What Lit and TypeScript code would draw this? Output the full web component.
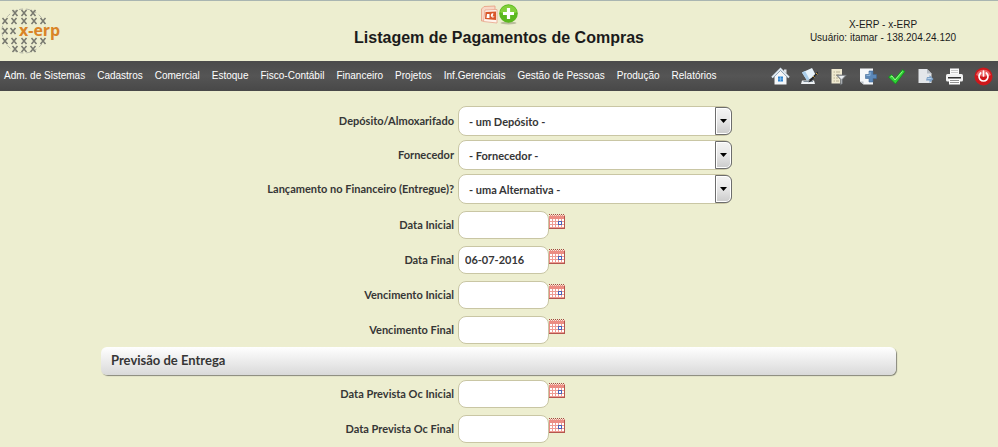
import { LitElement, html, css, svg } from "lit";
import { customElement, property } from "lit/decorators.js";

const MENU = [
  "Adm. de Sistemas", "Cadastros", "Comercial", "Estoque", "Fisco-Contábil", "Financeiro",
  "Projetos", "Inf.Gerenciais", "Gestão de Pessoas", "Produção", "Relatórios",
];

const TOOLS = [
  { label: "Início", art: svg`
    <path d="M3.500 9v8.500h12V9L9.500 3.500z" fill="#f4f6f8"/>
    <path d="M13 2.500h2.500v4L13 4.500z" fill="#dfe3e8"/>
    <path d="M1 10.500 9.500 2l8.500 8.500" fill="none" stroke="#dde7f0" stroke-width="2"/>
    <path d="M2.500 10.500 9.500 3.500l7 7" fill="none" stroke="#7b93a8" stroke-width=".7"/>
    <rect x="7" y="9.500" width="5" height="5" fill="#2f83cf"/>
    <path d="M9.500 9.500v5M7 12h5" stroke="#9fd0f4" stroke-width=".6"/>` },
  { label: "Editar", art: svg`
    <path d="M2 13.500h12l1 3.500H1z" fill="#eef1f4"/><path d="M3.500 14.500h9.500" stroke="#7f8c98"/>
    <path d="M2 5.500 12 1l4 7.500-9 5z" fill="#e8f3fb"/>
    <path d="m2 5.500 3-1.400 4.500 8.200L7 13.500z" fill="#a9cdea"/>
    <path d="M17.500 4.500 10 12.500l-1.500 3 3-1.500L18 6z" fill="#26292c"/>
    <path d="m16 6 1.500 1.500M13 9l1.500 1.500" stroke="#d7a23a"/>` },
  { label: "Filtrar", art: svg`
    <path d="M2.500 2H13v14.500H2.500z" fill="#efe9d0"/>
    <path d="M4.500 5H6m1 0h4M4.500 8H6m1 0h3M4.500 11H6m1 0h2M4.500 14H6m1 0h3" stroke="#b9b194"/>
    <path d="M7.500 8h10l-4 4.500v4l-2 1.500v-5.500z" fill="#a8acb0" stroke="#62666a" stroke-width=".7"/>
    <path d="M9.500 9h6l-3 3z" fill="#edf0f2"/>` },
  { label: "Novo", art: svg`
    <path d="M2 1.500h13v16H5.500L2 14.500z" fill="#f5f7f9"/><path d="M2 14.500h3.500v3z" fill="#b8bec6"/>
    <path d="M11 4h4v3.500h3.500v4H15V15h-4v-3.500H7.500v-4H11z" fill="#5c88b8" stroke="#3f6998" stroke-width=".6"/>
    <path d="M12 5v3.500H8.500" fill="none" stroke="#90b6dc"/>` },
  { label: "Confirmar", art: svg`
    <path d="m1.500 10 3-2.500 3.500 4L15.500 2.500 18 4.500 8.500 17z" fill="#2fd335" stroke="#128a1a" stroke-width=".8"/>
    <path d="m3.500 10 1.500-1 3 4 7.500-8.500" fill="none" stroke="#9cf78d"/>` },
  { label: "Exportar", art: svg`
    <path d="M2.500 2H11l4.500 4.500V16h-13z" fill="#e3e6ea"/><path d="M11 2v4.500h4.500z" fill="#b5bbc3"/>
    <path d="M11 10h2.500v-2l4 4-4 4v-2.500H10z" fill="#7fa3c9"/>
    <path d="M11.500 11.500h4" stroke="#b6d0ea"/>` },
  { label: "Imprimir", art: svg`
    <path d="M5 1.500h9V8H5z" fill="#fafafa"/><path d="M6 3.500h7M6 5.500h7" stroke="#b5b5b5" stroke-width=".7"/>
    <rect x="1" y="7" width="17" height="7.500" rx="1.500" fill="#f1f1f1"/>
    <path d="M3 10h13v1.500H3z" fill="#333"/><path d="M4 12h11v5.500H4z" fill="#fff"/>
    <path d="M5 13.500h9M5 15.500h9" stroke="#777" stroke-width=".8"/>` },
  { label: "Sair", art: svg`
    <circle cx="9.500" cy="9.500" r="9" fill="#cf171b"/><path d="M2 8a8 8 0 0 1 15 0c-4 2-11 2-15 0z" fill="#ea6062"/>
    <path d="M6.700 6a4.500 4.500 0 1 0 5.600 0" fill="none" stroke="#fff" stroke-width="1.700" stroke-linecap="round"/>
    <path d="M9.500 4v5" stroke="#fff" stroke-width="1.700" stroke-linecap="round"/>` },
];

type Field = { id: string; label: string; option?: string; value?: string };

const FILTERS: Field[] = [
  { id: "deposito", label: "Depósito/Almoxarifado", option: "- um Depósito -" },
  { id: "fornecedor", label: "Fornecedor", option: "- Fornecedor -" },
  { id: "lancamento", label: "Lançamento no Financeiro (Entregue)?", option: "- uma Alternativa -" },
];

const DATES: Field[] = [
  { id: "data-inicial", label: "Data Inicial" },
  { id: "data-final", label: "Data Final", value: "06-07-2016" },
  { id: "venc-inicial", label: "Vencimento Inicial" },
  { id: "venc-final", label: "Vencimento Final" },
];

const DELIVERY: Field[] = [
  { id: "oc-inicial", label: "Data Prevista Oc Inicial" },
  { id: "oc-final", label: "Data Prevista Oc Final" },
];

const reset = css`
  :host, * { box-sizing: border-box; }
  button { border: 0; padding: 0; margin: 0; background: none; cursor: pointer; }
  svg { display: block; }
`;

@customElement("erp-header")
export class ErpHeader extends LitElement {
  static styles = [reset, css`
    :host {
      display: grid; grid-template-columns: 230px 1fr 230px; height: 61px;
      border-top: 1px solid #a9b5b1; color: #1b1b1b;
      font-family: "Liberation Sans", Arial, sans-serif;
    }
    .brand { padding: 6px 0 0 1px; }
    .brand text { font: bold 16px "Open Sans", sans-serif; fill: #d98427; }
    .center { display: flex; flex-direction: column; align-items: center; padding-top: 2px; }
    .quick { display: flex; height: 22px; }
    h1 { margin: 2px 0 0; font-size: 16px; line-height: 22px; font-weight: bold; white-space: nowrap; }
    .user { padding-top: 17px; font-size: 10px; line-height: 13px; text-align: center; }
    .user p { margin: 0; }
  `];

  render() {
    const rows: [number, number[]][] = [
      [6, [14, 23, 32]], [14, [4, 13, 23, 33, 42]], [24, [4, 12]],
      [34, [4, 13, 23, 33, 42]], [42, [14, 23, 32]],
    ];
    return html`
      <div class="brand">
        <svg width="62" height="50" viewBox="0 0 62 50" role="img" aria-label="x-erp">
          <circle cx="23" cy="24" r="22" fill="none" stroke="#b4b6a8" stroke-dasharray="4 3"/>
          ${rows.map(([y, xs]) => xs.map((x) => svg`<path
            d="M${x - 2.5} ${y - 3}l5 6m0-6l-5 6" stroke="#77786f" stroke-width="1.500"/>`))}
          <text x="18" y="29">x-erp</text>
        </svg>
      </div>
      <div class="center">
        <div class="quick">
          <button aria-label="Apresentação">
            <svg width="18" height="22" viewBox="0 0 18 22">
              <path d="M4 3.500 15 3v4L6 8l-2 10H1.500V6z" fill="#f7d8c6" stroke="#e79b7e" stroke-width=".8"/>
              <path d="m5 7 12-.5V20L3.500 18.500z" fill="#fff4ec" stroke="#e9a58b" stroke-width=".8"/>
              <path d="m5.500 9 10.500-.5v8.500l-11-1z" fill="#d9582a"/>
              <path d="M7 11h2.500v4H6.500zm6.500-.5a2 2 0 1 0 1 3h-2z" fill="#fff"/>
            </svg>
          </button>
          <button aria-label="Adicionar">
            <svg width="21" height="22" viewBox="0 0 21 22">
              <ellipse cx="10.500" cy="20" rx="8" ry="1.500" fill="#b9bd9c"/>
              <circle cx="10.500" cy="10.500" r="9.300" fill="#5bb81f"/>
              <path d="M2 9a8.700 8.700 0 0 1 17 0c-5 3-12 3-17 0z" fill="#83d13b"/>
              <path d="M10.500 5v11M5 10.500h11" stroke="#fff" stroke-width="3.200"/>
            </svg>
          </button>
        </div>
        <h1>Listagem de Pagamentos de Compras</h1>
      </div>
      <div class="user"><p>X-ERP - x-ERP</p><p>Usuário: itamar - 138.204.24.120</p></div>`;
  }
}

@customElement("erp-menu")
export class ErpMenu extends LitElement {
  static styles = [reset, css`
    :host {
      display: flex; align-items: center; justify-content: space-between;
      height: 30px; padding: 0 5px 0 4px; background: linear-gradient(#4b4b4b, #555 50%, #484848);
      font-family: "Liberation Sans", Arial, sans-serif;
    }
    nav { display: flex; gap: 12px; }
    a { color: #fff; font-size: 10px; line-height: 14px; text-decoration: none; white-space: nowrap; }
    .tools { display: flex; gap: 10px; }
  `];

  render() {
    return html`
      <nav>${MENU.map((m) => html`<a href="#">${m}</a>`)}</nav>
      <div class="tools">${TOOLS.map((t) => html`
        <button aria-label=${t.label}><svg width="19" height="19" viewBox="0 0 19 19">${t.art}</svg></button>`)}
      </div>`;
  }
}

@customElement("erp-fields")
export class ErpFields extends LitElement {
  @property({ attribute: false }) fields: Field[] = [];

  static styles = [reset, css`
    :host {
      display: flex; flex-direction: column;
      font: bold 11px "Lato", Calibri, sans-serif; color: #363636;
    }
    .row {
      display: grid; grid-template-columns: 454fr 540fr; gap: 4px;
      align-items: center; height: 35px;
    }
    .row.choice { height: 34px; }
    label { text-align: right; line-height: 16px; white-space: nowrap; }
    .field { display: flex; align-items: flex-start; }
    input, select {
      border: 1px solid #c9c6a4; border-radius: 8px; background: #fff; outline: 0;
      font: inherit; color: inherit; margin: 0;
    }
    input { width: 91px; height: 28px; padding: 0 6px; }
    .select { position: relative; width: 274px; }
    select { display: block; appearance: none; width: 100%; height: 30px; padding: 0 24px 0 10px; }
    .arrow {
      position: absolute; top: 1px; right: 0; width: 17px; height: 28px; pointer-events: none;
      border: 1px solid #6d6d6d; border-radius: 0 6px 6px 0;
      background: linear-gradient(#f4f4f4, #e6e6e6 50%, #cbcbcb); box-shadow: inset 0 0 0 1px #fff;
      display: grid; place-items: center;
    }
    .cal { margin-top: 3px; }
  `];

  private control(f: Field) {
    if (f.option) {
      return html`<div class="select">
        <select id=${f.id}><option>${f.option}</option></select>
        <span class="arrow"><svg width="7" height="4" viewBox="0 0 7 4"><path d="M0 0h7L3.500 4z"/></svg></span>
      </div>`;
    }
    return html`<input id=${f.id} type="text" .value=${f.value ?? ""}>
      <button class="cal" aria-label="Calendário: ${f.label}">
        <svg width="16" height="16" viewBox="0 0 16 16" shape-rendering="crispEdges">
          <path d="M0 1h16v14H0z" fill="#e98d84"/>
          <path d="M0 .5h16" stroke="#a3473f" stroke-dasharray="1 1"/>
          <path d="M0 1.500h16" stroke="#f3e6d6" stroke-dasharray="1 1"/>
          <path d="M0 2h16v2H0z" fill="#ec8d83"/>
          <path d="M1 5h14v9H1z" fill="#fff"/>
          <path d="M1 7.500h14M1 10.500h14M1 13.500h14M3.500 5v9M6.500 5v9M9.500 5v9M12.500 5v9" stroke="#ee9c93"/>
          <path d="M15.500 2v13M0 14.500h16" stroke="#b4564e"/>
          <path d="M9.500 7.500h3v3h-3z" fill="#fff" stroke="#4b63b8"/>
        </svg>
      </button>`;
  }

  render() {
    return this.fields.map((f) => html`
      <div class="row ${f.option ? "choice" : "date"}">
        <label for=${f.id}>${f.label}</label>
        <div class="field">${this.control(f)}</div>
      </div>`);
  }
}

@customElement("app-root")
export class AppRoot extends LitElement {
  static styles = css`
    :host { display: block; min-height: 100vh; background: #edeed0; }
    form { padding-top: 13px; display: flex; flex-direction: column; }
    .dates { padding: 1px 0 0; }
    h2 {
      box-sizing: border-box; height: 28px; margin: 0 102px 1px 101px; padding: 0 10px;
      border-radius: 6px; background: linear-gradient(#fff, #d9d9d9);
      box-shadow: 1px 1px 1px #85867a;
      font: bold 13px/27px "Lato", Calibri, sans-serif; color: #363636;
    }
  `;

  render() {
    return html`
      <erp-header></erp-header>
      <erp-menu></erp-menu>
      <form @submit=${(e: Event) => e.preventDefault()}>
        <erp-fields .fields=${FILTERS}></erp-fields>
        <erp-fields class="dates" .fields=${DATES}></erp-fields>
        <h2>Previsão de Entrega</h2>
        <erp-fields .fields=${DELIVERY}></erp-fields>
      </form>`;
  }
}
